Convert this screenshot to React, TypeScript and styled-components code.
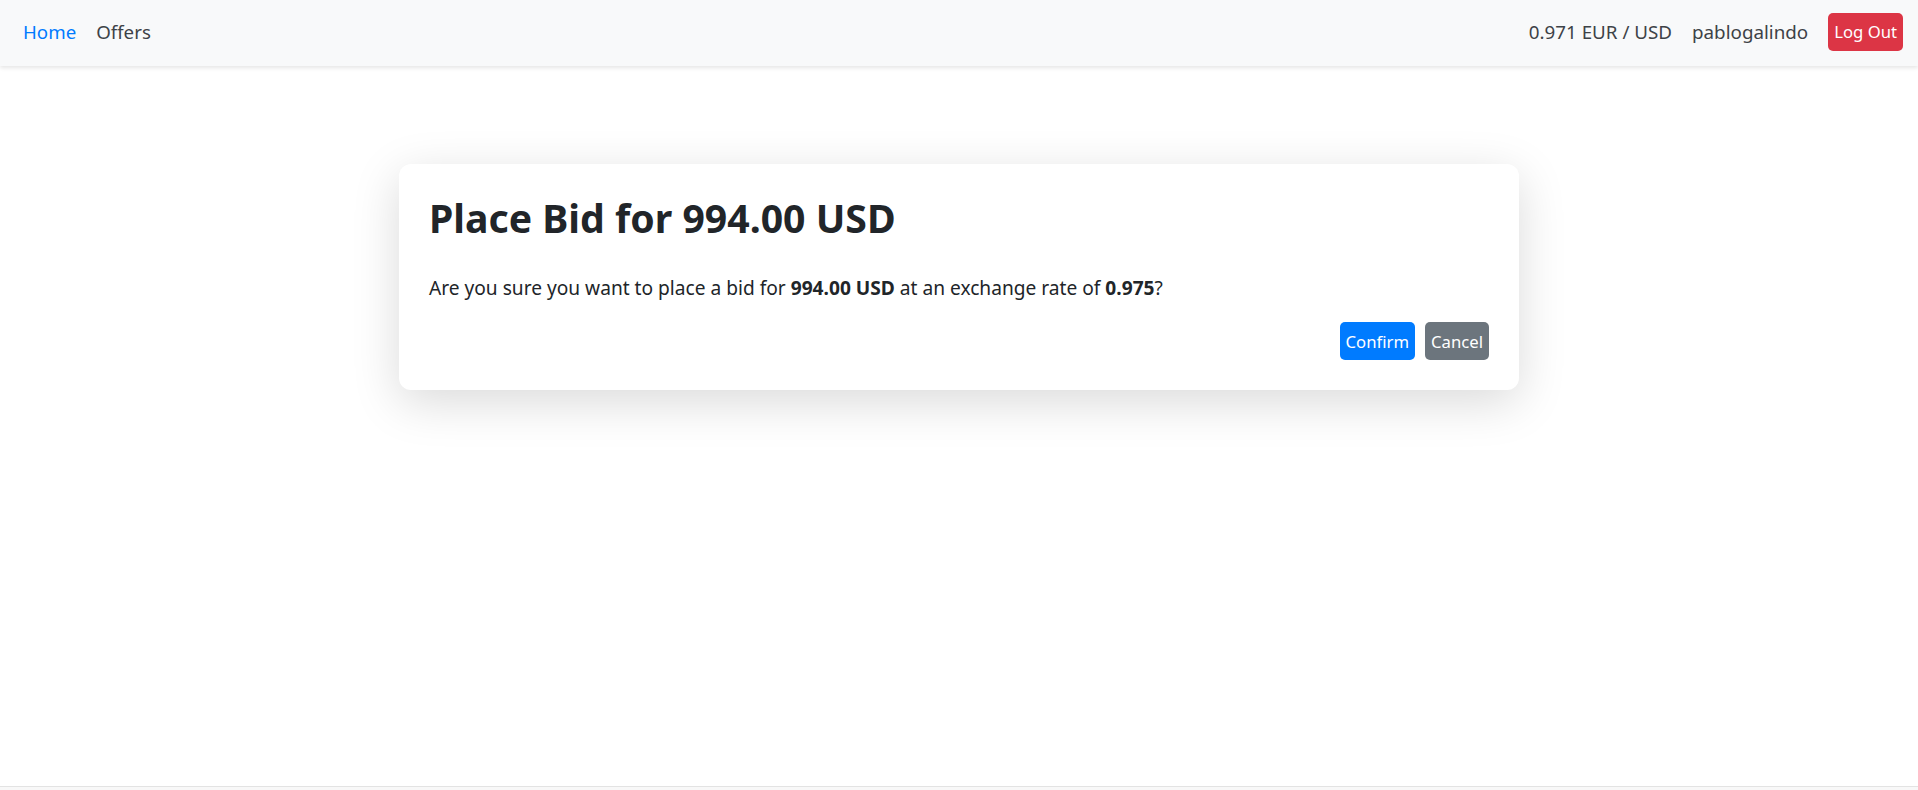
import styled, { createGlobalStyle } from "styled-components";

const GlobalStyle = createGlobalStyle`
  html, body {
    margin: 0;
    padding: 0;
    background: #ffffff;
    font-family: "Noto Sans", "Open Sans", Arial, sans-serif;
    color: #212529;
  }
  * {
    box-sizing: border-box;
  }
`;

const Page = styled.div`
  display: flex;
  flex-direction: column;
  min-height: 100vh;
`;

const NavBar = styled.nav`
  height: 66px;
  background: #f8f9fa;
  box-shadow: 0 2px 4px rgba(0, 0, 0, 0.1);
  display: flex;
  align-items: center;
  justify-content: space-between;
  padding: 0 15px 3px 23px;
  position: relative;
  z-index: 1;
`;

const NavGroup = styled.div`
  display: flex;
  align-items: center;
  gap: 20px;
`;

const NavLink = styled.a<{ $active?: boolean }>`
  font-size: 18.7px;
  color: ${(p) => (p.$active ? "#007bff" : "#3d4247")};
  text-decoration: none;
  cursor: pointer;
`;

const NavText = styled.span`
  font-size: 18.8px;
  color: #3d4247;
`;

const Button = styled.button<{ $variant: "primary" | "secondary" | "danger" }>`
  height: 38px;
  padding: 0 6px;
  border: none;
  border-radius: 5px;
  font-family: inherit;
  font-size: 16.7px;
  color: #ffffff;
  cursor: pointer;
  background: ${(p) =>
    p.$variant === "primary"
      ? "#007bff"
      : p.$variant === "secondary"
      ? "#6c757d"
      : "#dc3545"};
`;

const Main = styled.main`
  flex: 1;
  min-height: calc(100vh - 70px);
  padding-top: 98px;
  display: flex;
  justify-content: center;
  align-items: flex-start;
`;

const Card = styled.div`
  width: 1120px;
  background: #ffffff;
  border-radius: 12px;
  box-shadow: 0 12px 48px rgba(0, 0, 0, 0.15);
  padding: 30px;
`;

const Title = styled.h1`
  margin: 0 0 32px;
  font-size: 39.2px;
  line-height: 48px;
  font-weight: 700;
  color: #212529;
`;

const Message = styled.p`
  margin: 0 0 20px;
  font-size: 19.15px;
  line-height: 28px;
  color: #212529;
`;

const Actions = styled.div`
  display: flex;
  justify-content: flex-end;
  gap: 10px;
`;

const Footer = styled.footer`
  height: 4px;
  border-top: 1px solid #e3e3e3;
  background: #f8f8f8;
`;

export default function App() {
  const amount = "994.00 USD";
  const rate = "0.975";

  return (
    <>
      <GlobalStyle />
      <Page>
        <NavBar>
          <NavGroup>
            <NavLink $active>Home</NavLink>
            <NavLink>Offers</NavLink>
          </NavGroup>
          <NavGroup>
            <NavText>0.971 EUR / USD</NavText>
            <NavText>pablogalindo</NavText>
            <Button $variant="danger">Log Out</Button>
          </NavGroup>
        </NavBar>
        <Main>
          <Card>
            <Title>Place Bid for {amount}</Title>
            <Message>
              Are you sure you want to place a bid for <b>{amount}</b> at an
              exchange rate of <b>{rate}</b>?
            </Message>
            <Actions>
              <Button $variant="primary">Confirm</Button>
              <Button $variant="secondary">Cancel</Button>
            </Actions>
          </Card>
        </Main>
        <Footer />
      </Page>
    </>
  );
}
